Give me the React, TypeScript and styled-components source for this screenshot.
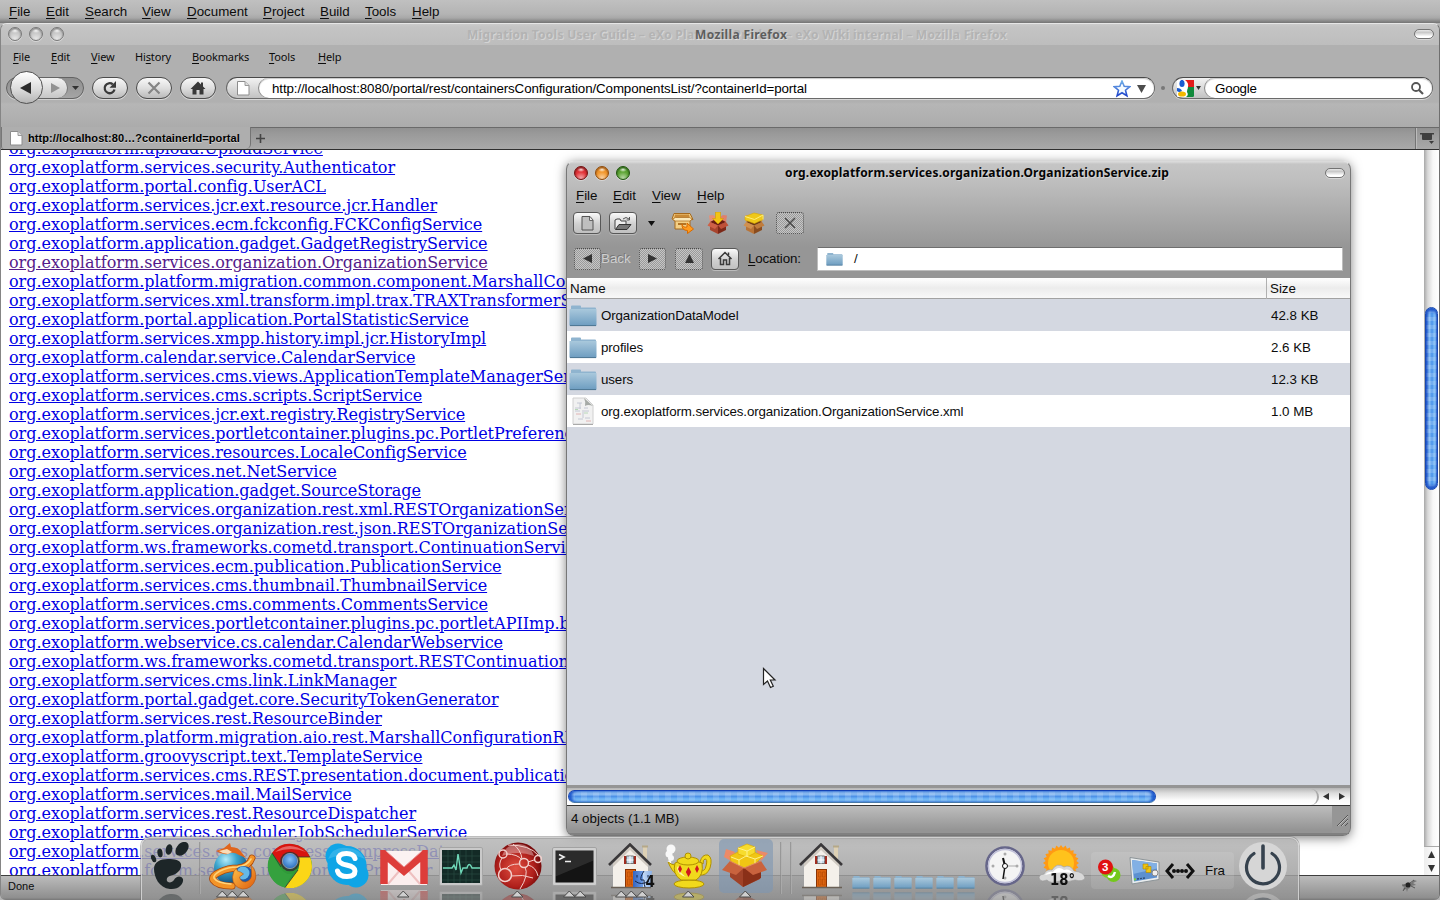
import React from "react";
import styled, { createGlobalStyle, css } from "styled-components";

const SANS = '"Liberation Sans", Arial, sans-serif';
const UI = '"Noto Sans", "Open Sans", sans-serif';

const Global = createGlobalStyle`
  html, body { margin: 0; padding: 0; overflow: hidden; }
  *, *::before, *::after { box-sizing: border-box; }
  svg { display: block; flex: none; }
  u { text-underline-offset: 2px; text-decoration-thickness: 1px; }
`;

/* ---------- desktop ---------- */

const Desktop = styled.div`
  position: relative;
  width: 1440px;
  height: 900px;
  overflow: hidden;
  background: #b4b4b4;
  font-family: ${SANS};
  font-size: 13.33px;
  color: #0c0c0c;
`;

const MenuBar = styled.div<{ $small?: boolean }>`
  display: flex;
  align-items: center;
  white-space: nowrap;
  ${(p) =>
    p.$small &&
    css`
      font-family: ${UI};
      font-size: 11px;
      letter-spacing: -0.15px;
    `}
`;

const MenuItem = styled.span<{ $w: number }>`
  width: ${(p) => p.$w}px;
`;

const GlobalMenu = styled(MenuBar)`
  height: 23px;
  padding-left: 9px;
  background: linear-gradient(#c0c0c0 0, #b4b4b4 14px, #a8a8a8 18px, #747474 23px);
`;

type Menu = [string, number, number][];

const Menus = ({ items }: { items: Menu }) => (
  <>
    {items.map(([label, w, u]) => (
      <MenuItem key={label} $w={w}>
        {label.slice(0, u)}
        <u>{label[u]}</u>
        {label.slice(u + 1)}
      </MenuItem>
    ))}
  </>
);

const globalItems: Menu = [
  ["File", 37, 0], ["Edit", 39, 0], ["Search", 57, 0], ["View", 45, 0], ["Document", 76, 0],
  ["Project", 57, 0], ["Build", 45, 0], ["Tools", 47, 0], ["Help", 40, 0],
];
const browserItems: Menu = [
  ["File", 38, 0], ["Edit", 40, 0], ["View", 44, 0], ["History", 57, 2], ["Bookmarks", 77, 0],
  ["Tools", 49, 0], ["Help", 40, 0],
];
const archiveItems: Menu = [["File", 37, 0], ["Edit", 39, 0], ["View", 45, 0], ["Help", 40, 0]];

/* ---------- window chrome ---------- */

const Light = styled.span<{ $c: string; $d: string }>`
  width: 14px;
  height: 14px;
  border-radius: 50%;
  border: 1px solid ${(p) => p.$d};
  background:
    radial-gradient(ellipse 4px 2.5px at 50% 2.5px, rgba(255, 255, 255, 0.9), rgba(255, 255, 255, 0)),
    radial-gradient(circle at 50% 95%, #fff9 0, transparent 50%),
    ${(p) => p.$c};
  box-shadow: inset 0 1px 2px ${(p) => p.$d}, 0 1px 0 #ffffff60;
`;

const Lights = styled.div`
  display: flex;
  gap: 7px;
`;

const TitlePill = styled.span`
  width: 20px;
  height: 10px;
  border: 1.5px solid #737373;
  border-radius: 5px;
  background: linear-gradient(#e8e8e8 0, #c8c8c8 30%, #fff 80%);
  box-shadow: 0 1px 0 #ffffff60;
`;

const TitleBar = styled.div`
  position: relative;
  display: flex;
  align-items: center;
  justify-content: space-between;
  height: 23px;
  padding: 0 5px 2px 7px;
`;

const TitleText = styled.span<{ $color: string; $ls?: number; $x: number }>`
  position: absolute;
  left: ${(p) => p.$x}px;
  top: 1px;
  white-space: nowrap;
  font: bold 12px/19px ${UI};
  letter-spacing: ${(p) => p.$ls ?? 0}px;
  color: ${(p) => p.$color};
  text-shadow: 1px 1px 0 rgba(255, 255, 255, 0.35);
`;

/* ---------- browser ---------- */

const Browser = styled.section`
  display: flex;
  flex-direction: column;
  height: 877px;
  border-left: 1px solid #858585;
  border-right: 1px solid #6f6f6f;
  border-top: 1px solid #e6e6e6;
  border-radius: 7px 7px 6px 6px;
  background: linear-gradient(#b0b0b0 0, #b0b0b0 78px, #b6b6b6 80px, #ababab 104px);
  overflow: hidden;
`;

const BrowserTitle = styled(TitleBar)`
  flex: none;
  height: 21px;
  background: linear-gradient(#cbcbcb 0, #c4c4c4 3px, #bdbdbd 100%);
`;

const BrowserMenu = styled(MenuBar)`
  flex: none;
  height: 25px;
  padding: 0 0 2px 12px;
`;

const NavBar = styled.div`
  display: flex;
  align-items: center;
  flex: none;
  height: 36px;
  padding: 0 5px;
`;

const HistoryGroup = styled.div`
  position: relative;
  display: flex;
  align-items: center;
  justify-content: flex-end;
  width: 78px;
  height: 22px;
  border: 1px solid #636363;
  border-radius: 11px;
  background: linear-gradient(#8f8f8f, #a5a5a5);
  box-shadow: 0 1px 0 #d0d0d0;
`;

const Forward = styled.span`
  display: flex;
  align-items: center;
  justify-content: flex-end;
  width: 36px;
  height: 20px;
  padding-right: 7px;
  border-right: 1px solid #777;
  border-radius: 0 10px 10px 0;
  background: linear-gradient(#f2f2f2, #c6c6c6);
`;

const DropArrow = styled.span`
  display: flex;
  justify-content: center;
  width: 15px;
`;

const Back = styled.span`
  position: absolute;
  left: 3px;
  top: -7px;
  display: flex;
  align-items: center;
  justify-content: center;
  width: 33px;
  height: 33px;
  padding-right: 2px;
  border: 1.5px solid #515151;
  border-radius: 50%;
  background: linear-gradient(#fff, #d8d8d8 60%, #b5b5b5);
`;

const PillButton = styled.span`
  display: flex;
  align-items: center;
  justify-content: center;
  width: 36px;
  height: 22px;
  margin-left: 8px;
  border: 1px solid #4c4c4c;
  border-radius: 11px;
  background: linear-gradient(#f8f8f8, #dedede 50%, #bababa);
  box-shadow: 0 1px 0 #d8d8d8;
`;

const Field = styled.div<{ $w: number; $ml: number }>`
  display: flex;
  width: ${(p) => p.$w}px;
  height: 22px;
  margin-left: ${(p) => p.$ml}px;
  border: 1px solid #6a6a6a;
  border-top-color: #484848;
  border-radius: 11px;
  background: linear-gradient(#f2f2f2, #c2c2c2);
  box-shadow: 0 1px 0 #d8d8d8;
`;

const FieldLead = styled.span<{ $w: number }>`
  display: flex;
  align-items: center;
  justify-content: center;
  gap: 2px;
  width: ${(p) => p.$w}px;
`;

const FieldInput = styled.span<{ $pad: number; $ls: number }>`
  display: flex;
  align-items: center;
  flex: 1;
  padding: 1px 8px 0 ${(p) => p.$pad}px;
  border-radius: 10px;
  background: #fff;
  box-shadow: inset 0 1px 1px #c8c8c8, -1px 0 0 #8a8a8a;
  letter-spacing: ${(p) => p.$ls}px;
  color: #000;
  white-space: nowrap;
  svg:first-of-type { margin-left: auto; }
`;

const Dot = styled.span`
  width: 4px;
  height: 4px;
  margin-left: 6px;
  border-radius: 50%;
  background: #787878;
`;

const TabStrip = styled.div`
  display: flex;
  flex: none;
  height: 23px;
  margin-top: 21px;
  border-top: 1px solid #6a6a6a;
  border-bottom: 1px solid #303030;
  background: linear-gradient(#919191, #999 25%, #a9a9a9);
`;

const Tab = styled.div`
  display: flex;
  align-items: center;
  width: 250px;
  margin-top: -1px;
  padding-left: 8px;
  border-left: 1px solid #777;
  border-right: 1px solid #747474;
  border-radius: 0 0 5px 3px;
  background: #aeaeae;
  font-size: 11px;
  font-weight: bold;
  letter-spacing: 0.08px;
  gap: 5px;
  color: #000;
  text-shadow: 0 1px 0 #d0d0d0;
`;

const NewTab = styled.span`
  display: flex;
  align-items: center;
  padding-left: 5px;
`;

const AllTabs = styled.span`
  display: flex;
  align-items: center;
  justify-content: center;
  width: 24px;
  margin-left: auto;
  border-left: 1px solid #747474;
  box-shadow: inset 1px 0 0 #bcbcbc;
`;

const Content = styled.div`
  display: flex;
  flex: 1;
  min-height: 0;
  background: #fff;
`;

const Links = styled.div`
  flex: 1;
  overflow: hidden;
  padding-left: 8px;
  font: 16px/19px "DejaVu Serif", serif;
  letter-spacing: -0.02px;
`;

const LinkList = styled.div`
  margin-top: -11px;
  white-space: nowrap;
`;

const PageLink = styled.a<{ $visited?: boolean }>`
  display: block;
  width: max-content;
  height: 19px;
  color: ${(p) => (p.$visited ? "#551a8b" : "#0000e4")};
  text-decoration: underline;
`;

const VScroll = styled.div`
  position: relative;
  display: flex;
  flex-direction: column;
  width: 15px;
  padding-top: 157px;
  background: linear-gradient(90deg, #a8a8a8, #d8d8d8 25%, #f8f8f8 60%, #fff);
`;

const VThumb = styled.div`
  width: 13px;
  height: 183px;
  margin-left: 1px;
  border: 1px solid #1948b0;
  border-radius: 7px;
  background:
    repeating-linear-gradient(0deg, rgba(255, 255, 255, 0.18) 0 4px, transparent 4px 8px),
    linear-gradient(90deg, #2458c8, #84bdf5 30%, #4a93ea 55%, #94d0fc 85%, #3a6fc8);
  box-shadow: inset 0 3px 3px #1c52c8, inset 0 -3px 3px #1c52c8;
`;

const VArrows = styled.div`
  display: flex;
  flex-direction: column;
  align-items: center;
  justify-content: space-around;
  height: 29px;
  margin-top: auto;
  border-top: 1px solid #aaa;
  background: linear-gradient(90deg, #eee, #fff);
`;

const StatusBar = styled.div`
  display: flex;
  align-items: center;
  justify-content: space-between;
  flex: none;
  height: 25px;
  padding: 0 21px 5px 7px;
  border-top: 1px solid #3e3e3e;
  background: linear-gradient(#bcbcbc, #8f8f8f 90%, #777);
  font-size: 11px;
`;

/* ---------- archive manager ---------- */

const Archive = styled.section`
  position: absolute;
  left: 566px;
  top: 161px;
  display: flex;
  flex-direction: column;
  width: 785px;
  height: 675px;
  border: 1px solid #777;
  border-top: 1px solid #dadada;
  border-radius: 8px;
  background: linear-gradient(#d8d8d8 0, #c5c5c5 2px, #bebebe 20px, #969696 85px, #969696 100%);
  box-shadow: 0 2px 11px rgba(0, 0, 0, 0.5);
  overflow: hidden;
`;

const ArchiveMenu = styled(MenuBar)`
  height: 20px;
  padding-left: 9px;
`;

const ToolRow = styled.div<{ $h: number }>`
  display: flex;
  align-items: center;
  height: ${(p) => p.$h}px;
  padding: 0 7px 0 6px;
`;

const ToolButton = styled.span<{ $off?: boolean; $ml?: number; $w?: number }>`
  display: flex;
  align-items: center;
  justify-content: center;
  flex: none;
  width: ${(p) => p.$w ?? 28}px;
  height: 22px;
  margin-left: ${(p) => p.$ml ?? 0}px;
  border: 1px solid #585858;
  border-radius: 4px;
  background: linear-gradient(#fafafa, #d0d0d0 55%, #c0c0c0);
  box-shadow: 0 1px 0 #bbb;
  ${(p) =>
    p.$off &&
    css`
      border: 1px dotted #4a4a4a;
      border-radius: 3px;
      background: repeating-conic-gradient(#c6c6c6 0 25%, #9a9a9a 0 50%) 0 0 / 2px 2px;
      box-shadow: none;
    `}
`;

const ToolIcon = styled.span<{ $ml: number }>`
  margin-left: ${(p) => p.$ml}px;
`;

const BackLabel = styled.span`
  width: 31px;
  color: #cfcfcf;
  text-shadow: -1px -1px 0 #777;
`;

const LocLabel = styled.span`
  width: 69px;
  margin-left: 9px;
  letter-spacing: -0.15px;
`;

const LocInput = styled.span`
  display: flex;
  align-items: center;
  gap: 11px;
  flex: 1;
  height: 24px;
  padding-left: 8px;
  border: 1px solid #bdbdbd;
  border-top: 1px solid #6e6e6e;
  background: #fff;
`;

const Grid = styled.div`
  display: grid;
  grid-template-columns: 699px 1fr;
`;

const HeadRow = styled(Grid)`
  flex: none;
  height: 21px;
  margin-top: 2px;
  border-bottom: 1px solid #a2a2a2;
  background: linear-gradient(#fff, #ececec 50%, #f8f8f8);
`;

const HeadCell = styled.span<{ $line?: boolean }>`
  padding-left: 3px;
  line-height: 21px;
  border-left: ${(p) => (p.$line ? "1px solid #b0b0b0" : "none")};
`;

const FileRow = styled(Grid)<{ $alt: boolean }>`
  flex: none;
  height: 32px;
  align-items: center;
  background: ${(p) => (p.$alt ? "#d4d8e1" : "#fff")};
`;

const FileName = styled.span`
  display: flex;
  align-items: center;
  gap: 3px;
  letter-spacing: -0.12px;
`;

const FileIconBox = styled.span`
  display: flex;
  justify-content: center;
  width: 31px;
`;

const FileSize = styled.span`
  padding-left: 5px;
`;

const Blank = styled.div`
  flex: 1;
  border-bottom: 3px solid #959595;
  background: #d4d8e1;
`;

const HScroll = styled.div`
  display: flex;
  flex: none;
  align-items: center;
  height: 18px;
  padding: 0 2px 0 1px;
  border-bottom: 1px solid #333;
  background: linear-gradient(#b5b5b5, #dcdcdc 30%, #fbfbfb 70%, #fff);
`;

const HThumb = styled.div`
  width: 588px;
  height: 13px;
  border: 1px solid #1443b4;
  border-bottom-color: #4678a8;
  border-radius: 7px;
  background:
    repeating-linear-gradient(90deg, rgba(255, 255, 255, 0.15) 0 6px, transparent 6px 12px),
    linear-gradient(#9cc8f4 0, #8abcf2 30%, #4d92e8 50%, #6db4f6 70%, #a6e4fc);
  box-shadow: inset 3px 0 3px #1c58cc, inset -3px 0 3px #1c58cc;
`;

const HCap = styled.span`
  width: 12px;
  height: 16px;
  margin-left: auto;
  border-right: 2px solid #aaa;
  border-radius: 0 8px 8px 0;
`;

const HArrows = styled.span`
  display: flex;
  gap: 10px;
  padding: 0 3px 0 4px;
`;

const ArchiveStatus = styled.div`
  display: flex;
  flex: none;
  height: 29px;
  border-bottom: 2px solid #808080;
`;

const ArchiveCount = styled.span`
  flex: 1;
  padding: 5px 0 0 4px;
  background: linear-gradient(#bdbdbd, #949494 90%);
`;

const Grip = styled.span`
  display: flex;
  align-items: flex-end;
  width: 18px;
  padding: 0 0 7px 4px;
`;

/* ---------- dock ---------- */

const Dock = styled.div`
  position: absolute;
  left: 141px;
  top: 837px;
  display: flex;
  width: 1158px;
  height: 63px;
  border: 1px solid rgba(220, 220, 220, 0.8);
  border-bottom: none;
  border-radius: 9px 9px 0 0;
  background: linear-gradient(rgba(180, 180, 180, 0.84), rgba(160, 160, 160, 0.84) 60%, rgba(146, 146, 146, 0.84));
  box-shadow: 0 0 0 1px rgba(110, 110, 110, 0.45), inset 0 1px 0 #aaa;
  overflow: hidden;
`;

const Slot = styled.div<{ $w: number; $top?: number; $ml?: number }>`
  position: relative;
  display: flex;
  align-items: flex-start;
  justify-content: center;
  flex: none;
  width: ${(p) => p.$w}px;
  margin-left: ${(p) => p.$ml ?? 0}px;
  padding-top: ${(p) => p.$top ?? 5}px;
  > svg {
    -webkit-box-reflect: below 3px linear-gradient(transparent, rgba(0, 0, 0, 0.4));
  }
`;

const Glow = styled.div`
  position: absolute;
  left: 2px;
  top: 1px;
  width: 54px;
  height: 54px;
  border-radius: 5px;
  background: rgba(125, 150, 178, 0.6);
`;

const ActiveSlot = styled(Slot)`
  > svg { position: relative; }
`;

const Running = styled.div`
  position: absolute;
  left: 0;
  right: 0;
  top: 52px;
  display: flex;
  justify-content: center;
`;

const Separator = styled.div<{ $ml: number; $mr: number }>`
  flex: none;
  width: 2px;
  height: 52px;
  margin: 4px ${(p) => p.$mr}px 0 ${(p) => p.$ml}px;
  background: linear-gradient(90deg, #777, #c2c2c2);
  opacity: 0.7;
`;

const Folders = styled.div`
  display: flex;
  gap: 3px;
  flex: none;
  width: 137px;
  padding: 37px 0 0 4px;
  > svg {
    -webkit-box-reflect: below 3px linear-gradient(transparent, rgba(0, 0, 0, 0.45));
  }
`;

const Tray = styled.div`
  display: flex;
  align-items: center;
  flex: none;
  width: 143px;
  height: 37px;
  margin-top: 14px;
  padding-left: 7px;
  border-radius: 4px;
  background: rgba(255, 255, 255, 0.1);
`;

const TrayLabel = styled.span`
  margin-left: 10px;
`;

/* ---------- icons ---------- */

const Tri = ({ w, h, dir, c = "#333" }: { w: number; h: number; dir: "l" | "r" | "u" | "d"; c?: string }) => {
  const pts = {
    l: `0,${h / 2} ${w},0 ${w},${h}`,
    r: `${w},${h / 2} 0,0 0,${h}`,
    u: `${w / 2},0 0,${h} ${w},${h}`,
    d: `${w / 2},${h} 0,0 ${w},0`,
  }[dir];
  return <svg width={w} height={h}><polygon points={pts} fill={c} /></svg>;
};

const PageIcon = () => (
  <svg width="13" height="16" viewBox="0 0 13 16">
    <path d="M.5 1.5h7.500l4 4v9.500H.5z" fill="#fff" stroke="#8d8d8d" />
    <path d="M8 1.500v4h4" fill="#ddd" stroke="#999" />
  </svg>
);

const FolderIcon = ({ w, h }: { w: number; h: number }) => (
  <svg width={w} height={h} viewBox="0 0 28 23" preserveAspectRatio="none">
    <defs>
      <linearGradient id="fold" x1="0" y1="0" x2="0" y2="1">
        <stop offset="0" stopColor="#a9c8dc" />
        <stop offset="1" stopColor="#6c9cc0" />
      </linearGradient>
    </defs>
    <path d="M2 5V2.500q0-1 1-1h8q1 0 1 1v1h14q1 0 1 1V7H1V5z" fill="#8fb4cf" />
    <path d="M.5 5h27v16q0 1-1 1h-25q-1 0-1-1z" fill="url(#fold)" />
    <path d="M1 21.600h26" stroke="#4d7592" strokeWidth="1" />
  </svg>
);

const XmlIcon = () => (
  <svg width="22" height="28" viewBox="0 0 22 28">
    <path d="M1 1h13l7 7v19H1z" fill="#f1f1f1" stroke="#d0d0d0" />
    <path d="M12 1l9 8q-5-2-8 0 1-4-1-8z" fill="#a6aaa6" />
    <g stroke="#c4c8d4" fill="none">
      <path d="M5 6h5M3 11h6M3 14h5M12 11h4M12 14h5M6 22h5M13 21h5M8 6v6M11 13v8" />
      <path d="M4 17h5M14 24h5" stroke="#e0b4b4" />
      <path d="M3 12.500h3M12 16h4" stroke="#b8d8b8" />
    </g>
    <path d="M1 27.500h20" stroke="#aaa" />
  </svg>
);

const ReloadIcon = () => (
  <svg width="16" height="16" viewBox="0 0 16 16">
    <path d="M12.500 9.500A5 5 0 1 1 10.800 4.300" fill="none" stroke="#3a3a3a" strokeWidth="2.300" />
    <path d="M14 1v6.700H7.500z" fill="#3a3a3a" />
  </svg>
);

const StopIcon = () => (
  <svg width="14" height="14" viewBox="0 0 14 14">
    <path d="M1.500 1.500l11 11M12.500 1.500l-11 11" stroke="#858585" strokeWidth="2.200" />
  </svg>
);

const HomeIcon = () => (
  <svg width="16" height="14" viewBox="0 0 16 14">
    <path d="M8 .5L.5 8h2v5.500h4V9h3v4.500h4V8h2L13 5.500V1.500h-2v2z" fill="#383838" />
  </svg>
);

const StarIcon = () => (
  <svg width="18" height="18" viewBox="0 0 18 18">
    <defs>
      <linearGradient id="star" x1="0" y1="0" x2="0" y2="1">
        <stop offset="0" stopColor="#72b0e8" />
        <stop offset="1" stopColor="#1f45cc" />
      </linearGradient>
    </defs>
    <path d="M9 1l2.200 5.200 5.600.4-4.300 3.600 1.400 5.600L9 12.800l-4.900 3 1.400-5.600L1.200 6.600l5.600-.4z" fill="#f4fbff" stroke="url(#star)" strokeWidth="1.600" />
  </svg>
);

const GoogleIcon = () => (
  <svg width="17" height="17" viewBox="0 0 17 17">
    <rect width="17" height="17" fill="#fff" rx="1" />
    <path d="M8 0h9v7h-6q1-4-3-7z" fill="#e31b1b" />
    <path d="M11 7h6v9q0 1-1 1H9q3-2 1-5 0-3 1-5z" fill="#118a3c" />
    <path d="M0 8q4 0 5 3-3 2-5 0z" fill="#1a5bd0" />
    <ellipse cx="5" cy="3.500" rx="2.600" ry="3.600" fill="#1a5bd0" />
    <path d="M9 6q3 2 0 5 0-3-2-4z" fill="#fff" />
    <ellipse cx="5" cy="14" rx="4" ry="2.600" fill="#f5b800" />
  </svg>
);

const SearchIcon = () => (
  <svg width="13" height="13" viewBox="0 0 13 13">
    <circle cx="5" cy="5" r="4" fill="none" stroke="#555" strokeWidth="1.800" />
    <path d="M8 8l4 4" stroke="#555" strokeWidth="2.200" />
  </svg>
);

const AllTabsIcon = () => (
  <svg width="15" height="11" viewBox="0 0 15 11">
    <path d="M0 0h14v1.500h-2V6q0 1-1 1H3Q2 7 2 6V1.500H0z" fill="#3e3e3e" />
    <path d="M9 8h5l-2.500 3z" fill="#3e3e3e" />
  </svg>
);

const FlyIcon = () => (
  <svg width="17" height="13" viewBox="0 0 17 13">
    <path d="M4 5q3-3 6-1l3-3 3 1-4 2 3 2-5 1q-1 3-3 3l-1 3-1-3-3 1 1-3-2-1z" fill="#777" />
    <circle cx="7" cy="6" r="2.500" fill="#222" />
    <path d="M9 4l4-3M10 7l4 2M4 9l-2 3M1 6h3" stroke="#444" strokeWidth=".8" />
  </svg>
);

const NewDoc = () => (
  <svg width="13" height="15" viewBox="0 0 13 15">
    <path d="M1 .5h8l3 3.500v10H1z" fill="#bfbfbf" stroke="#555" />
    <path d="M8.500 1v3.500H12" fill="#eee" stroke="#666" />
  </svg>
);

const OpenDoc = () => (
  <svg width="18" height="15" viewBox="0 0 18 15">
    <path d="M1 13V4l2-1h3l1 2h5v4" fill="#eee" stroke="#444" />
    <path d="M1.500 13.500L5 8.500h12l-4 5z" fill="#777" stroke="#333" />
    <path d="M9 3q3-3 6 0M15.500 1v3h-3" fill="none" stroke="#555" />
  </svg>
);

const ExportBox = () => (
  <svg width="24" height="22" viewBox="0 0 24 22">
    <path d="M3 1.500h16l3 6-3 .5v9H4V9L1 7z" fill="#f3cf85" stroke="#a5691c" />
    <path d="M4 2.500h14l1 4H3z" fill="#c98a35" />
    <path d="M1.500 7l3-1.500h14l2.500 1.500-2 2H4z" fill="#fbe8b8" stroke="#b07428" strokeWidth=".8" />
    <path d="M7 12h8" stroke="#b07428" strokeWidth="2" />
    <path d="M11 12q1 4 5 3v-4l6.500 6-6 4.500v-3q-6 0-5.500-6.500z" fill="#ff9b1e" stroke="#d76a00" />
  </svg>
);

const BoxIcon = ({ kind }: { kind: "add" | "extract" }) => {
  const red = kind === "add";
  return (
    <svg width="22" height="22" viewBox="0 0 22 22">
      <path d="M3 10l8 3.500V22l-8-4z" fill={red ? "#a8452e" : "#b87438"} />
      <path d="M11 13.500l8-3.500v8l-8 4z" fill={red ? "#7c2818" : "#8a4c1e"} />
      <path d="M2 3.500l4-.5 5 3.500-8 4z" fill={red ? "#e59078" : "#d9a468"} />
      <path d="M20 3.500L16 3l-5 3.500 8 4z" fill={red ? "#e0806a" : "#d09858"} />
      <path d="M3 10l8-4 8 4-8 3.500z" fill={red ? "#6c1c10" : "#6e3a14"} />
      {red ? (
        <path d="M8.500 0h5v6.500h3L11 12 5.500 6.500h3z" fill="#f2c414" stroke="#d39a00" strokeWidth=".6" />
      ) : (
        <>
          <path d="M2 4.500L11 1l9 2v4.500l-8.500 4L2 8z" fill="#efc81a" stroke="#d8a800" strokeWidth=".6" />
          <path d="M2 4.500l9.500 3L20 3v4.500" fill="none" stroke="#fff07a" />
        </>
      )}
      <path d="M3 10l8 3.500-3 3.500-7.500-3.500z" fill={red ? "#cf6046" : "#d09050"} />
      <path d="M19 10l-8 3.500 3 3.500 7.500-3.500z" fill={red ? "#bf5038" : "#c07c3c"} />
    </svg>
  );
};

const XIcon = () => (
  <svg width="12" height="12" viewBox="0 0 12 12">
    <path d="M1 1l10 10M11 1L1 11" stroke="#4a4a4a" strokeWidth="1.500" />
  </svg>
);

const OutlineHome = () => (
  <svg width="16" height="15" viewBox="0 0 16 15">
    <path d="M1.500 8L8 1.500 14.500 8M3.500 7v6.500h3V9h3v4.500h3V7" fill="none" stroke="#3b3b3b" strokeWidth="1.500" />
    <path d="M11.500 4V1.500" stroke="#3b3b3b" strokeWidth="1.500" />
  </svg>
);

const GripIcon = () => (
  <svg width="12" height="12" viewBox="0 0 12 12">
    <path d="M1 12L12 1M5 12l7-7M9 12l3-3" stroke="#555" />
    <path d="M2 12L12 2M6 12l6-6" stroke="#ccc" strokeWidth=".7" />
  </svg>
);

const FootIcon = () => (
  <svg width="40" height="48" viewBox="0 0 40 48">
    <g fill="#1d2628">
      <path d="M33 0c6-1 7 5 4 9-3 5-9 6-11 3-2-4 2-11 7-12z" />
      <ellipse cx="19" cy="7.500" rx="3.300" ry="5.300" transform="rotate(12 19 7.500)" />
      <ellipse cx="10" cy="11" rx="2.600" ry="4.400" transform="rotate(-8 10 11)" />
      <ellipse cx="3.600" cy="16.500" rx="2.300" ry="4" transform="rotate(-22 3.600 16.500)" />
      <path d="M31 22c1 5-3 9-8 11-5 1-7 3-6 6 1 2 5 2 7-1 2-4 7-5 9-1 1 5-5 11-13 10C9 46 4 35 4 27c0-7 6-10 14-10 7 0 12 1 13 5z" />
    </g>
  </svg>
);

const FirefoxIcon = () => (
  <svg width="48" height="48" viewBox="0 0 48 48">
    <defs>
      <radialGradient id="sea" cx=".35" cy=".25" r=".8">
        <stop offset="0" stopColor="#b4ecfa" />
        <stop offset=".4" stopColor="#3aa4cc" />
        <stop offset="1" stopColor="#0b3f70" />
      </radialGradient>
      <linearGradient id="fox" x1="0" y1="0" x2="1" y2="1">
        <stop offset="0" stopColor="#ffc64a" />
        <stop offset="1" stopColor="#de5a0c" />
      </linearGradient>
    </defs>
    <circle cx="22" cy="25" r="17" fill="url(#sea)" />
    <path d="M7 8l8-3 6-5 1 4q8 0 11 6l4 5-7-3q-6-4-11-1-6 1-12-3z" fill="#e0651c" />
    <path d="M10 8l8-2 5 3-4 2q-5 0-9-3z" fill="#f9dcb8" />
    <g fill="none" strokeLinecap="round">
      <path d="M43 15q-3 9-14 10-10 0-18 4-9 4-7 8 4 6 19 6" stroke="#a8480c" strokeWidth="7" />
      <path d="M43 15q-3 9-14 10-10 0-18 4-9 4-7 8 4 6 19 6" stroke="#f39428" strokeWidth="5.400" />
      <path d="M42 16q-4 7-14 8-9 0-17 4-7 4-6 7 3 5 17 6" stroke="#ffd47a" strokeWidth="1.600" />
    </g>
    <circle cx="34.500" cy="33.500" r="10.500" fill="#1c5aa8" />
    <circle cx="34" cy="30" r="6.500" fill="#65b9e8" />
    <path d="M42 22q6 6 4.500 14-3 10-13 10-10-2-10-12 1-7 4-9 0 4 4 4l3 2-4 3q1 5 6 5 7-2 6-9 0-4-.5-8z" fill="url(#fox)" stroke="#b4500e" strokeWidth=".6" />
  </svg>
);

const ChromeIcon = () => (
  <svg width="46" height="46" viewBox="0 0 46 46">
    <defs>
      <radialGradient id="cblue" cx=".5" cy=".4" r=".7">
        <stop offset="0" stopColor="#86c2f6" />
        <stop offset="1" stopColor="#1c5fb4" />
      </radialGradient>
    </defs>
    <circle cx="23" cy="23" r="22" fill="#2f9a38" />
    <path d="M5 10A22 22 0 0 1 43 14H23q-6 0-9 8z" fill="#d8150f" />
    <path d="M43 14A22 22 0 0 1 18 44.500L31 27q3-7-2-13z" fill="#fbd617" />
    <path d="M5 10L13 24q4 8 12 7L18 44.500A22 22 0 0 1 5 10z" fill="#35a13e" />
    <path d="M29 14h14M31 27L18 44.500M5 10l9 14" fill="none" stroke="#333" strokeWidth=".8" />
    <path d="M8 9Q22-3 39 9q-14-6-31 0z" fill="#fff" opacity=".35" />
    <circle cx="23" cy="18.500" r="9.800" fill="#333" opacity=".85" />
    <circle cx="23" cy="18" r="7.600" fill="url(#cblue)" stroke="#8a98a8" />
  </svg>
);

const SkypeIcon = () => (
  <svg width="44" height="46" viewBox="0 0 44 46">
    <g fill="#0fa5e6">
      <circle cx="13" cy="13" r="12.500" />
      <circle cx="31" cy="32" r="12.500" />
      <circle cx="22" cy="22.500" r="19.500" />
    </g>
    <path d="M3 16Q8 3 22 5q12 0 18 11-18-8-37 0z" fill="#fff" opacity=".15" />
    <path d="M30 15.500q-1.500-5-8.500-5-8 0-8 5.500 0 4.500 8 6 8.500 1.800 8.500 6 0 5.500-8 5.500-8 0-9.500-5.500" fill="none" stroke="#fff" strokeWidth="5" strokeLinecap="round" />
  </svg>
);

const GmailIcon = () => (
  <svg width="48" height="36" viewBox="0 0 48 36">
    <rect x="1" y="1" width="46" height="34" fill="#fbeeee" />
    <path d="M8 34l13-15M40 34L27 19" stroke="#eec0c0" strokeWidth="2" />
    <path d="M4 34V4l20 17L44 4v30" fill="none" stroke="#dd3d3a" strokeWidth="7.500" />
    <path d="M6 1l18 16L42 1z" fill="#fbf2f2" />
    <path d="M6 1l18 16L42 1" fill="none" stroke="#e89090" strokeWidth="1" />
  </svg>
);

const MonitorIcon = () => (
  <svg width="44" height="40" viewBox="0 0 44 40">
    <rect x=".5" y=".5" width="43" height="38" rx="1.500" fill="#c9c9c9" stroke="#a5a5a5" />
    <rect x="3" y="3" width="38" height="33" fill="#132a26" />
    <path d="M9 3v33M15 3v33M21 3v33M27 3v33M33 3v33M3 9h38M3 15h38M3 21h38M3 27h38M3 33h38" stroke="#2a4a43" strokeWidth=".7" />
    <path d="M4 21h9l2-3 2 5 2-16 3 19 2-5h4q2-7 5 0h8" fill="none" stroke="#6fd8b8" strokeWidth="1.400" />
  </svg>
);

const GlobeIcon = () => (
  <svg width="48" height="48" viewBox="0 0 48 48">
    <defs>
      <radialGradient id="red" cx=".45" cy=".55" r=".55">
        <stop offset="0" stopColor="#e05042" />
        <stop offset=".7" stopColor="#b0201c" />
        <stop offset="1" stopColor="#760a0a" />
      </radialGradient>
    </defs>
    <circle cx="24" cy="24" r="23.500" fill="url(#red)" />
    <path d="M8 14Q12 2 24 2t16 12q-16-6-32 0z" fill="#fff" opacity=".35" />
    <g fill="none" stroke="#f3d0cc" strokeWidth="1">
      <circle cx="11" cy="33" r="6.500" strokeWidth="1.500" />
      <circle cx="30" cy="21" r="4.500" strokeWidth="1.500" />
      <circle cx="9" cy="12" r="4" strokeWidth="1.500" />
      <circle cx="44" cy="17" r="3.500" strokeWidth="1.500" />
      <path d="M12 12q12 0 16 6M34 20l6-2M25 22Q15 22 12 27M17 34q12-2 22 2M31 25q4 8-5 22M8 16q-4 6-1 12M28 17q-1-9-9-15M14 3q22 0 30 10M34 23q8 2 10 11" />
    </g>
  </svg>
);

const TerminalIcon = () => (
  <svg width="45" height="40" viewBox="0 0 45 40">
    <rect x=".5" y=".5" width="44" height="38" rx="1.500" fill="#cfcfcf" stroke="#a2a2a2" />
    <rect x="3.500" y="3.500" width="38" height="32" fill="#141414" />
    <path d="M3.500 3.500h38v10l-38 16z" fill="#fff" opacity=".1" />
    <path d="M7 7.500l5 2.500-5 2.500M13 14.500h6" fill="none" stroke="#eee" strokeWidth="1.600" />
  </svg>
);

const HouseIcon = ({ badge }: { badge?: boolean }) => (
  <svg width="47" height="47" viewBox="0 0 47 47">
    <defs>
      <linearGradient id="finder" x1="0" y1="0" x2="1" y2="0">
        <stop offset="0" stopColor="#3465c0" />
        <stop offset=".5" stopColor="#6a9ae4" />
        <stop offset=".55" stopColor="#c2d8f4" />
        <stop offset="1" stopColor="#88b0e8" />
      </linearGradient>
    </defs>
    <rect x="35" y="4" width="4" height="13" fill="#ddd0b4" />
    <path d="M34 3.500h6" stroke="#b5a888" strokeWidth="2" />
    <path d="M5 20L22 3l18 17v24H5z" fill="#f4f0ea" />
    <path d="M5 20L22 3l18 17v4L22 7 5 24z" fill="#b8b0a6" opacity=".6" />
    <path d="M1 22L22 1.500 43 22" fill="none" stroke="#3a383a" strokeWidth="2.600" />
    <path d="M16 13h12v8H16z" fill="#a02c20" />
    <path d="M18.500 13h7v7.500h-7z" fill="#c6d8e8" stroke="#777" />
    <path d="M22 13v7.500M18.500 17h7" stroke="#fff" />
    <rect x="17" y="26" width="11" height="18" fill="#8a3404" />
    <rect x="18" y="27" width="9" height="17" fill="#dc6410" />
    <path d="M19.500 29h2.500v5h-2.500zM23.500 29H26v5h-2.500zM19.500 36h2.500v6h-2.500zM23.500 36H26v6h-2.500z" fill="none" stroke="#b84c04" strokeWidth=".7" />
    <path d="M3 44.500h40" stroke="#6a6056" strokeWidth="1.600" />
    {badge && (
      <>
        <path d="M25 28h19q-2 8-1 16H25z" fill="url(#finder)" />
        <path d="M36 28q-4 6-3 9h3q0 5 1 7M27 38q6 5 14 0M29 32v2.500M40 32v2.500" fill="none" stroke="#152648" />
        <text x="37.500" y="43.500" fontFamily="DejaVu Sans Condensed, DejaVu Sans" fontWeight="bold" fontSize="15" fill="#111">4</text>
      </>
    )}
  </svg>
);

const TeapotIcon = () => (
  <svg width="48" height="46" viewBox="0 0 48 46">
    <g fill="#f8f8f8">
      <circle cx="6" cy="6" r="4.500" /><circle cx="4" cy="11" r="3.500" /><circle cx="6" cy="15" r="3" /><circle cx="4.500" cy="19" r="1.800" />
    </g>
    <g fill="#f1d91c" stroke="#b09000">
      <ellipse cx="24" cy="41" rx="15" ry="4" />
      <path d="M35 19q2-8 8-7 5 3 2 13-3 8-11 7v-4q6 1 7-5 2-7-1-7-2 0-2 5z" />
      <path d="M10 30Q7 28 3 19q4 3 7 3z" />
      <path d="M10 20q12-6 27 0 2 12-6 17H16Q7 31 10 20z" />
      <ellipse cx="23" cy="18" rx="11" ry="4" />
      <circle cx="23" cy="13" r="3" />
    </g>
    <path d="M13 23q3 9 9 11-9-1-10-9z" fill="#fff7a0" />
    <path d="M15 22l2 4-2 4-2-4zM23.500 24l2.700 5-2.700 5-2.700-5zM32 22l2 4-2 4-2-4z" fill="#d01820" />
  </svg>
);

const ParcelIcon = () => (
  <svg width="48" height="46" viewBox="0 0 48 46">
    <path d="M8 18l14 7 16-7v18L21 44 8 34z" fill="#a04228" />
    <path d="M21 25l18-7v17l-18 9z" fill="#8a3018" />
    <path d="M4 6l9 3-4 9-7-4zM34 7l12 3-7 8z" fill="#ec8a68" />
    <g stroke="#e0ac00" strokeWidth=".7">
      <path d="M8 13l8-4 8 3 8-3 9 4-8 8-10 4-14-6z" fill="#f0c614" />
      <path d="M16 5l9-4 8 3v6l-8 4-9-3z" fill="#f7dc2e" />
    </g>
    <path d="M16 5l9 3 8-4M25 8v6M9 14l8 3 7-4 9 3 8-3M17 17v6M33 16v5" fill="none" stroke="#fff28a" />
    <path d="M8 18L0 27l14 5 8-7zM39 18L22 25l9 7 14-5z" fill="#c9633e" />
    <path d="M8 18l14 7M39 18l-17 7" stroke="#e08a60" />
  </svg>
);

const ClockIcon = () => (
  <svg width="40" height="40" viewBox="0 0 40 40">
    <circle cx="20" cy="20" r="18.500" fill="#f4f4f4" stroke="#66668a" strokeWidth="2.600" />
    <circle cx="20" cy="20" r="16.500" fill="none" stroke="#c0c0d8" strokeWidth="1.400" />
    <g fill="#aaa"><circle cx="20" cy="8" r="1.500" /><circle cx="32" cy="20" r="1.500" /><circle cx="8" cy="20" r="1.500" /><circle cx="20" cy="32" r="1.500" /></g>
    <path d="M20 20h12" stroke="#aaa" />
    <path d="M20 20l-2-8" stroke="#111" strokeWidth="2" />
    <path d="M20 20l-2 13" stroke="#111" strokeWidth="1.500" />
    <circle cx="20" cy="20" r="2.500" fill="#fff" stroke="#111" />
  </svg>
);

const rays = Array.from({ length: 48 }, (_, i) => {
  const a = (i * Math.PI) / 24;
  const r = i % 2 ? 15.500 : 18;
  return `${23 + r * Math.cos(a)},${18 + r * Math.sin(a)}`;
}).join(" ");

const WeatherIcon = () => (
  <svg width="48" height="44" viewBox="0 0 48 44">
    <polygon points={rays} fill="#ff9a14" />
    <circle cx="23" cy="18" r="13" fill="#ffc21c" />
    <path d="M2 35q-3-5 4-6 2-5 8-4 5-8 12-3 6-3 10 4 10 1 11 7-2 4-10 2-8 3-15 1-10 3-13-1-5 2-7 0z" fill="#d8d8d8" stroke="#9b9b9b" strokeWidth=".6" />
    <path d="M7 30q3-4 8-3 5-7 11-2 5-2 9 3-14-2-28 2z" fill="#fff" />
    <text x="12" y="40" fontFamily="DejaVu Sans Condensed, DejaVu Sans" fontWeight="bold" fontSize="16" fill="#111" textLength="25" lengthAdjust="spacingAndGlyphs">18°</text>
  </svg>
);

const SkypeTray = () => (
  <svg width="24" height="24" viewBox="0 0 24 24">
    <circle cx="10" cy="12" r="7" fill="#7ccc28" />
    <circle cx="15.500" cy="16" r="7" fill="#74c81c" />
    <path d="M10 17q5 3 7-4" fill="none" stroke="#fff" strokeWidth="2.500" />
    <circle cx="7.500" cy="8" r="7.500" fill="#e01212" />
    <text x="4" y="12" fontFamily="Liberation Sans" fontWeight="bold" fontSize="11.500" fill="#fff">3</text>
  </svg>
);

const ScreenTray = () => (
  <svg width="32" height="30" viewBox="0 0 32 30">
    <path d="M1 1.500l29 4.500v17.500L3 28z" fill="#e8ecee" stroke="#8c9498" />
    <path d="M3 4l25 3.500v14L5 25.500z" fill="#5c90d0" />
    <path d="M3 4l25 3.500v5L4 18z" fill="#82b0e4" />
    <path d="M14 8h5v5h-5zM17 10.500h5v6h-5z" fill="#f0c412" stroke="#b08a00" strokeWidth=".6" />
    <circle cx="26" cy="17" r="3" fill="#eee" stroke="#888" />
    <path d="M5 23.500l2-.3" stroke="#7bd830" strokeWidth="2" />
    <path d="M8 23l8-1" stroke="#2c4c78" strokeWidth="1.500" strokeDasharray="2 1" />
  </svg>
);

const NetTray = () => (
  <svg width="30" height="16" viewBox="0 0 30 16">
    <path d="M8 1L2 8l6 7M22 1l6 7-6 7" fill="none" stroke="#111" strokeWidth="3" />
    <g fill="#111"><circle cx="9" cy="8" r="2" /><circle cx="13" cy="8" r="2" /><circle cx="17" cy="8" r="2" /><circle cx="21" cy="8" r="2" /></g>
  </svg>
);

const PowerIcon = () => (
  <svg width="48" height="48" viewBox="0 0 48 48">
    <circle cx="24" cy="24" r="24" fill="#d6d6d6" />
    <path d="M15 11.500a16.500 16.500 0 1 0 18 0" fill="none" stroke="#36424e" strokeWidth="3.200" strokeLinecap="round" />
    <path d="M24 4v22" stroke="#36424e" strokeWidth="3.600" strokeLinecap="round" />
  </svg>
);

const Marks = ({ n }: { n: number }) => (
  <Running>
    {Array.from({ length: n }, (_, i) => (
      <svg key={i} width="10.500" height="8" viewBox="0 0 10.500 8" overflow="visible">
        <path d="M-.5 7L5.250 1 11 7z" fill="#cfcfcf" stroke="#4a4a4a" />
      </svg>
    ))}
  </Running>
);

const Cursor = styled.svg`
  position: absolute;
  left: 762px;
  top: 667px;
`;

/* ---------- data ---------- */

const P = "org.exoplatform.";
const links = [
  "upload.UploadService", "services.security.Authenticator", "portal.config.UserACL",
  "services.jcr.ext.resource.jcr.Handler", "services.ecm.fckconfig.FCKConfigService",
  "application.gadget.GadgetRegistryService", "services.organization.OrganizationService",
  "platform.migration.common.component.MarshallConfigurationService",
  "services.xml.transform.impl.trax.TRAXTransformerService",
  "portal.application.PortalStatisticService", "services.xmpp.history.impl.jcr.HistoryImpl",
  "calendar.service.CalendarService", "services.cms.views.ApplicationTemplateManagerService",
  "services.cms.scripts.ScriptService", "services.jcr.ext.registry.RegistryService",
  "services.portletcontainer.plugins.pc.PortletPreferencesPersister",
  "services.resources.LocaleConfigService", "services.net.NetService",
  "application.gadget.SourceStorage", "services.organization.rest.xml.RESTOrganizationServiceXML",
  "services.organization.rest.json.RESTOrganizationServiceJSON",
  "ws.frameworks.cometd.transport.ContinuationServiceDelegate",
  "services.ecm.publication.PublicationService", "services.cms.thumbnail.ThumbnailService",
  "services.cms.comments.CommentsService",
  "services.portletcontainer.plugins.pc.portletAPIImp.bundle.ResourceBundleDelegate",
  "webservice.cs.calendar.CalendarWebservice",
  "ws.frameworks.cometd.transport.RESTContinuationService", "services.cms.link.LinkManager",
  "portal.gadget.core.SecurityTokenGenerator", "services.rest.ResourceBinder",
  "platform.migration.aio.rest.MarshallConfigurationRESTService",
  "groovyscript.text.TemplateService",
  "services.cms.REST.presentation.document.publication.PublicationGetDocument",
  "services.mail.MailService", "services.rest.ResourceDispatcher",
  "services.scheduler.JobSchedulerService", "services.ems.compress.CompressData",
  "forum.service.user.ContactProvider",
];

const files = [
  { name: "OrganizationDataModel", size: "42.8 KB", folder: true },
  { name: "profiles", size: "2.6 KB", folder: true },
  { name: "users", size: "12.3 KB", folder: true },
  { name: "org.exoplatform.services.organization.OrganizationService.xml", size: "1.0 MB", folder: false },
];

/* ---------- assembly ---------- */

const BrowserWindow = () => (
  <Browser>
    <BrowserTitle>
      <Lights>
        {[0, 1, 2].map((i) => <Light key={i} $c="#c9c9c9" $d="#777" />)}
      </Lights>
      <TitleText $x={466} $color="#b3b3b3" $ls={0.27}>
        Migration Tools User Guide – eXo Platform Product – eXo Wiki internal – Mozilla Firefox
      </TitleText>
      <TitleText $x={694} $color="#5e5e5e" $ls={0.35}>Mozilla Firefox</TitleText>
      <TitlePill />
    </BrowserTitle>
    <BrowserMenu $small><Menus items={browserItems} /></BrowserMenu>
    <NavBar>
      <HistoryGroup>
        <Forward><Tri w={9} h={10} dir="r" c="#929292" /></Forward>
        <DropArrow><Tri w={7} h={4} dir="d" /></DropArrow>
        <Back><Tri w={11} h={12} dir="l" c="#2c2c2c" /></Back>
      </HistoryGroup>
      <PillButton><ReloadIcon /></PillButton>
      <PillButton><StopIcon /></PillButton>
      <PillButton><HomeIcon /></PillButton>
      <Field $w={929} $ml={10}>
        <FieldLead $w={32}><PageIcon /></FieldLead>
        <FieldInput $pad={13} $ls={-0.11}>
          http://localhost:8080/portal/rest/containersConfiguration/ComponentsList/?containerId=portal
          <StarIcon />
          <FieldLead $w={15}><Tri w={9} h={8} dir="d" c="#4c4c4c" /></FieldLead>
        </FieldInput>
      </Field>
      <Dot />
      <Field $w={261} $ml={7}>
        <FieldLead $w={32}><GoogleIcon /><Tri w={5} h={4} dir="d" /></FieldLead>
        <FieldInput $pad={10} $ls={-0.2}>Google<SearchIcon /></FieldInput>
      </Field>
    </NavBar>
    <TabStrip>
      <Tab><PageIcon />http://localhost:80…?containerId=portal</Tab>
      <NewTab>
        <svg width="9" height="9"><path d="M4.500 0v9M0 4.500h9" stroke="#444" strokeWidth="1.600" /></svg>
      </NewTab>
      <AllTabs><AllTabsIcon /></AllTabs>
    </TabStrip>
    <Content>
      <Links>
        <LinkList>
          {links.map((l) => (
            <PageLink key={l} $visited={l.endsWith("OrganizationService")}>{P + l}</PageLink>
          ))}
        </LinkList>
      </Links>
      <VScroll>
        <VThumb />
        <VArrows>
          <Tri w={7} h={7} dir="u" />
          <Tri w={7} h={7} dir="d" />
        </VArrows>
      </VScroll>
    </Content>
    <StatusBar>Done<FlyIcon /></StatusBar>
  </Browser>
);

const ArchiveWindow = () => (
  <Archive>
    <TitleBar>
      <Lights>
        <Light $c="#e2353a" $d="#6e1414" />
        <Light $c="#f2982e" $d="#8a4a10" />
        <Light $c="#5fa636" $d="#1f5210" />
      </Lights>
      <TitleText $x={218} $color="#050505" $ls={0.18}>org.exoplatform.services.organization.OrganizationService.zip</TitleText>
      <TitlePill />
    </TitleBar>
    <ArchiveMenu><Menus items={archiveItems} /></ArchiveMenu>
    <ToolRow $h={36}>
      <ToolButton><NewDoc /></ToolButton>
      <ToolButton $ml={8}><OpenDoc /></ToolButton>
      <ToolIcon $ml={11}><Tri w={7} h={5} dir="d" c="#111" /></ToolIcon>
      <ToolIcon $ml={16}><ExportBox /></ToolIcon>
      <ToolIcon $ml={12}><BoxIcon kind="add" /></ToolIcon>
      <ToolIcon $ml={14}><BoxIcon kind="extract" /></ToolIcon>
      <ToolButton $off $ml={11}><XIcon /></ToolButton>
    </ToolRow>
    <ToolRow $h={35}>
      <ToolButton $off $ml={1} $w={27}><Tri w={9} h={9} dir="l" /></ToolButton>
      <BackLabel>Back</BackLabel>
      <ToolButton $off $ml={7} $w={27}><Tri w={9} h={9} dir="r" /></ToolButton>
      <ToolButton $off $ml={9}><Tri w={9} h={9} dir="u" /></ToolButton>
      <ToolButton $ml={8}><OutlineHome /></ToolButton>
      <LocLabel><u>L</u>ocation:</LocLabel>
      <LocInput><FolderIcon w={17} h={14} />/</LocInput>
    </ToolRow>
    <HeadRow>
      <HeadCell>Name</HeadCell>
      <HeadCell $line>Size</HeadCell>
    </HeadRow>
    {files.map((f, i) => (
      <FileRow key={f.name} $alt={i % 2 === 0}>
        <FileName>
          <FileIconBox>{f.folder ? <FolderIcon w={28} h={23} /> : <XmlIcon />}</FileIconBox>
          {f.name}
        </FileName>
        <FileSize>{f.size}</FileSize>
      </FileRow>
    ))}
    <Blank />
    <HScroll>
      <HThumb />
      <HCap />
      <HArrows>
        <Tri w={6} h={7} dir="l" />
        <Tri w={6} h={7} dir="r" />
      </HArrows>
    </HScroll>
    <ArchiveStatus>
      <ArchiveCount>4 objects (1.1 MB)</ArchiveCount>
      <Grip><GripIcon /></Grip>
    </ArchiveStatus>
  </Archive>
);

const DockPanel = () => (
  <Dock>
    <Slot $w={56} $top={4}><FootIcon /></Slot>
    <Separator $ml={1} $mr={3} />
    <Slot $w={57}><FirefoxIcon /><Marks n={3} /></Slot>
    <Slot $w={57}><ChromeIcon /></Slot>
    <Slot $w={57}><SkypeIcon /></Slot>
    <Slot $w={57} $top={12}><GmailIcon /><Marks n={1} /></Slot>
    <Slot $w={57} $top={9}><MonitorIcon /></Slot>
    <Slot $w={57} $top={4}><GlobeIcon /><Marks n={1} /></Slot>
    <Slot $w={57} $top={9}><TerminalIcon /><Marks n={2} /></Slot>
    <Slot $w={57}><HouseIcon badge /><Marks n={3} /></Slot>
    <Slot $w={57}><TeapotIcon /><Marks n={1} /></Slot>
    <ActiveSlot $w={57}><Glow /><ParcelIcon /><Marks n={1} /></ActiveSlot>
    <Separator $ml={6} $mr={8} />
    <Separator $ml={0} $mr={4} />
    <Slot $w={52}><HouseIcon /></Slot>
    <Folders>
      {Array.from({ length: 6 }, (_, i) => <FolderIcon key={i} w={18} h={14} />)}
    </Folders>
    <Slot $w={40} $top={8}><ClockIcon /></Slot>
    <Slot $w={58} $ml={8} $top={7}><WeatherIcon /></Slot>
    <Tray>
      <SkypeTray />
      <ToolIcon $ml={7}><ScreenTray /></ToolIcon>
      <ToolIcon $ml={4}><NetTray /></ToolIcon>
      <TrayLabel>Fra</TrayLabel>
    </Tray>
    <Slot $w={58} $top={4}><PowerIcon /></Slot>
  </Dock>
);

export default function App() {
  return (
    <Desktop>
      <Global />
      <GlobalMenu><Menus items={globalItems} /></GlobalMenu>
      <BrowserWindow />
      <ArchiveWindow />
      <DockPanel />
      <Cursor width="15" height="22" viewBox="0 0 15 22">
        <path d="M1.500 1.500v16l4-3.500 3 6.500 2.800-1.200-3-6.300H13z" fill="#fff" stroke="#222" strokeWidth="1.200" />
      </Cursor>
    </Desktop>
  );
}
